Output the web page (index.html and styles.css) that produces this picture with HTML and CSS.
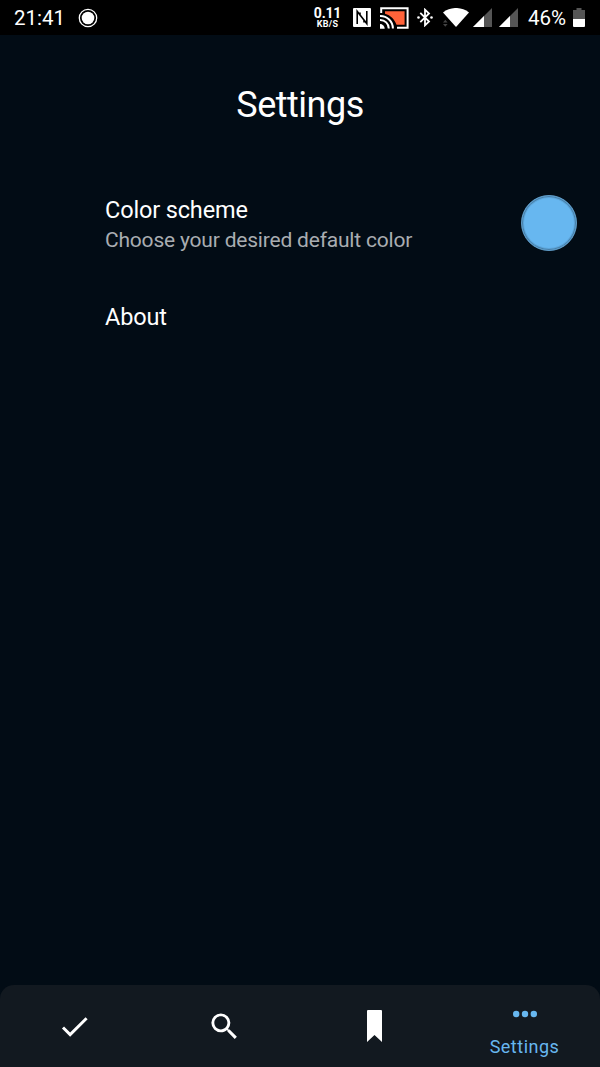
FILE: index.html
```
<!DOCTYPE html>
<html lang="en">
<head>
<meta charset="utf-8">
<title>Settings</title>
<link rel="stylesheet" href="styles.css">
</head>
<body>
<div class="screen">
  <header class="status">
    <span class="time">21:41</span>
    <svg class="record" width="20" height="20" viewBox="0 0 20 20"><circle cx="10" cy="10" r="8.7" fill="none" stroke="#fff" stroke-width="1.3"/><circle cx="10" cy="10" r="6.3" fill="#fff"/></svg>
    <div class="tray">
      <div class="speed"><span class="rate">0.11</span><span class="unit">KB/S</span></div>
      <svg class="nfc" width="18" height="19" viewBox="0 0 18 19"><rect width="18" height="19" rx="1" fill="#fff"/><path d="M4.200 16V3.400L11 12V14.500M13.800 3V15.600L7 7V4.500" fill="none" stroke="#000" stroke-width="1.600"/></svg>
      <svg class="cast" width="29" height="22" viewBox="0 0 29 22"><path d="M1.200 6V1.200H27.600V20.800H17" fill="none" stroke="#fff" stroke-width="2"/><path d="M5 4.200H24.600V17.800H16.500C14.500 12.300 10.600 8.200 5 6.800Z" fill="#ff6239"/><path d="M0 9A12.500 12.500 0 0 1 12.900 21.500M0 13A8.500 8.500 0 0 1 8.800 21.500" fill="none" stroke="#fff" stroke-width="2"/><path d="M0 17A4.700 4.700 0 0 1 4.700 21.700H0Z" fill="#fff"/></svg>
      <svg class="bluetooth" width="16" height="19" viewBox="0 0 16 19"><path d="M3.300 4.800L12 13.500L8 17.300V1.700L12 5.500L3.300 14.200" fill="none" stroke="#fff" stroke-width="1.800"/><circle cx="1.500" cy="9.500" r="1.300" fill="#fff"/><circle cx="14.500" cy="9.500" r="1.300" fill="#fff"/></svg>
      <svg class="wifi" width="26" height="19" viewBox="0 0 26 19"><path d="M0 4.400C7.500 -1.500 18.500 -1.500 26 4.400L13 19Z" fill="#fff"/><path d="M0 14.500L2.300 11.700L4.600 14.500ZM0 16L2.300 18.800L4.600 16Z" fill="#444"/></svg>
      <svg class="signal" width="19" height="19" viewBox="0 0 19 19"><path d="M0 19L19 0V19Z" fill="#555"/><path d="M0 19L11 8V19Z" fill="#fff"/></svg>
      <svg class="signal second" width="19" height="19" viewBox="0 0 19 19"><path d="M0 19L19 0V19Z" fill="#555"/><path d="M0 19L11 8V19Z" fill="#fff"/></svg>
      <span class="percent">46%</span>
      <svg class="battery" width="12" height="19" viewBox="0 0 12 19"><path d="M0 11V2H3.500V0H8.500V2H12V11Z" fill="#555"/><path d="M0 11H12V18Q12 19 11 19H1Q0 19 0 18Z" fill="#fff"/></svg>
    </div>
  </header>
  <main class="content">
    <h1 class="title">Settings</h1>
    <section class="row">
      <div class="labels">
        <div class="label">Color scheme</div>
        <div class="hint">Choose your desired default color</div>
      </div>
      <div class="swatch"></div>
    </section>
    <section class="row about"><div class="label">About</div></section>
  </main>
  <nav class="tabs">
    <a class="tab"><svg width="35" height="35" viewBox="0 0 24 24"><path fill="#fff" d="M9 16.170L4.830 12L3.410 13.410L9 19L21 7L19.590 5.590Z"/></svg></a>
    <a class="tab"><svg width="35" height="35" viewBox="0 0 24 24"><path fill="#fff" d="M15.500 14h-.79l-.28-.27A6.471 6.471 0 0 0 16 9.500 6.500 6.500 0 1 0 9.500 16c1.610 0 3.090-.59 4.230-1.570l.27.28v.79l5 4.990L20.490 19l-4.990-5zm-6 0C7.010 14 5 11.990 5 9.500S7.010 5 9.500 5 14 7.010 14 9.500 11.990 14 9.500 14z"/></svg></a>
    <a class="tab"><svg width="15" height="32" viewBox="0 0 15 32"><path fill="#fff" d="M1 0H14Q15 0 15 1V32L7.500 25L0 32V1Q0 0 1 0Z"/></svg></a>
    <a class="tab active"><svg width="24" height="8" viewBox="0 0 24 8" fill="#67b7f0"><circle cx="3.200" cy="4" r="3.200"/><circle cx="12" cy="4" r="3.200"/><circle cx="20.800" cy="4" r="3.200"/></svg><span class="tab-label">Settings</span></a>
  </nav>
</div>
</body>
</html>
```
FILE: styles.css
```
* { box-sizing: border-box; }
body { margin: 0; background: #020c15; color: #fff; font-family: Roboto, "Liberation Sans", sans-serif; }
svg { display: block; flex: none; }
.screen { width: 600px; height: 1067px; display: flex; flex-direction: column; overflow: hidden; }
.status { height: 35px; flex: none; display: flex; align-items: center; padding: 0 15px 0 14px; background: #000; }
.time { width: 64px; padding-top: 1px; font-size: 20.5px; line-height: 34px; }
.tray { margin-left: auto; display: flex; align-items: center; }
.speed { width: 27px; margin-right: 12px; display: flex; flex-direction: column; align-items: center; font-weight: 700; }
.rate { font-size: 14px; line-height: 14px; letter-spacing: -.2px; }
.unit { font-size: 9px; line-height: 9px; letter-spacing: .3px; }
.nfc { margin-right: 9px; }
.cast { margin-right: 8px; }
.bluetooth { margin-right: 10px; }
.wifi { margin-right: 4px; }
.signal { margin-right: 7px; }
.signal.second { margin-right: 10px; }
.percent { width: 45px; padding-top: 1px; font-size: 20.5px; line-height: 34px; }
.content { flex: 1; }
.title { margin: 48px 0 0; text-align: center; font-size: 36px; line-height: 44px; font-weight: 400; letter-spacing: -.5px; }
.row { display: flex; align-items: center; justify-content: space-between; padding: 0 23px 0 105px; }
.title + .row { margin-top: 68px; height: 56px; }
.labels { padding-top: 4px; }
.label { font-size: 23.5px; line-height: 30px; letter-spacing: -.15px; }
.hint { font-size: 21px; line-height: 30px; letter-spacing: -.2px; color: #a9adb1; white-space: nowrap; }
.swatch { width: 56px; height: 56px; border-radius: 50%; background: #67b7f0; border: 1px solid #5f9bc6; box-shadow: inset 0 0 0 1px #477fa8, inset 0 0 0 2px #5da6db; }
.about { margin-top: 51px; }
.tabs { height: 82px; flex: none; display: grid; grid-template-columns: repeat(4, 1fr); background: #121920; border-radius: 14px 14px 0 0; }
.tab { display: flex; flex-direction: column; align-items: center; justify-content: center; padding-right: 1px; }
.active { justify-content: flex-start; padding: 25px 1px 0 0; color: #67b7f0; }
.tab-label { margin-top: 19px; font-size: 18px; line-height: 20px; letter-spacing: .5px; }
```
